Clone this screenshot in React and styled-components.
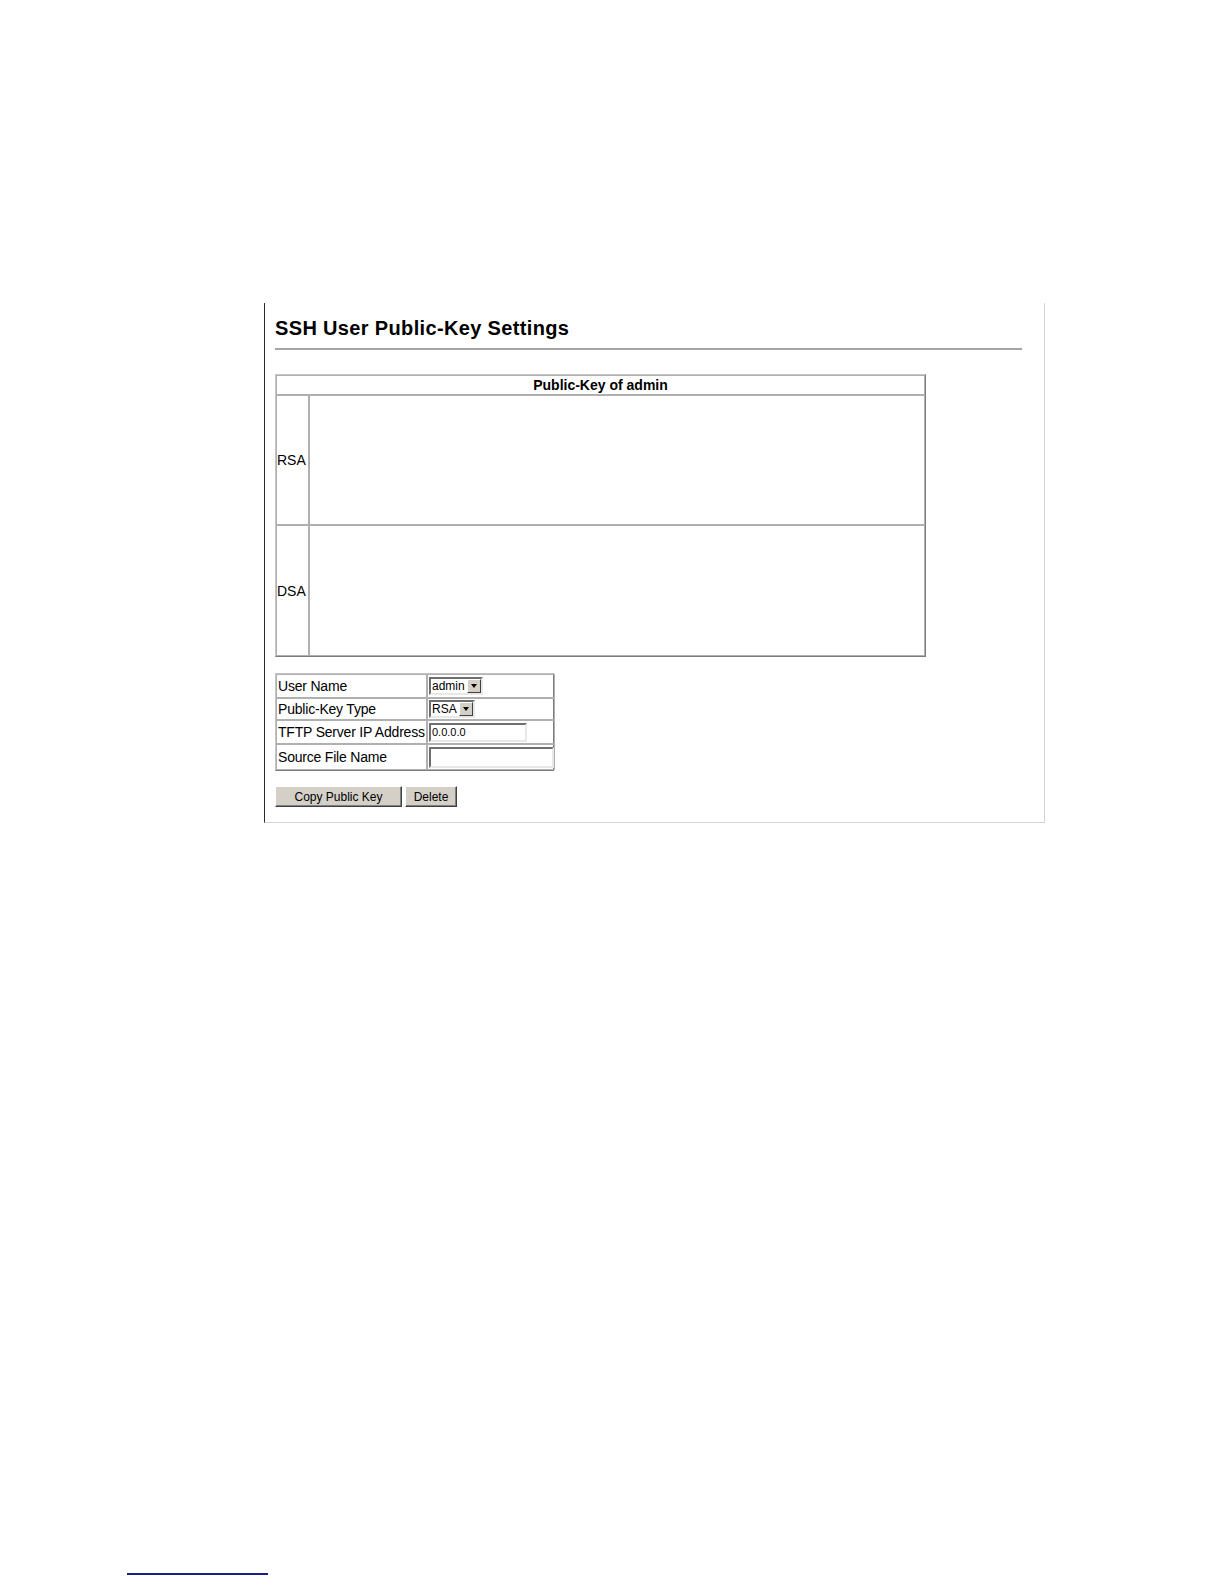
import React from "react";
import styled, { createGlobalStyle } from "styled-components";

const GlobalStyle = createGlobalStyle`
  html, body {
    margin: 0;
    padding: 0;
    background: #fff;
  }
  body {
    font-family: "Liberation Sans", Arial, sans-serif;
    color: #000;
  }
`;

const Page = styled.div`
  padding-top: 303px;
  padding-bottom: 6px;
`;

const Frame = styled.div`
  margin-left: 264px;
  width: 781px;
  height: 520px;
  box-sizing: border-box;
  border-left: 1px solid #2a2a2a;
  border-right: 1px solid #d4d4d4;
  border-bottom: 1px solid #d4d4d4;
  padding: 13px 0 0 10px;
`;

const Title = styled.h1`
  margin: 0;
  font-size: 20px;
  line-height: 24px;
  font-weight: bold;
  letter-spacing: 0.35px;
`;

const Rule = styled.div`
  margin-top: 8px;
  width: 747px;
  height: 2px;
  background: #a6a6a6;
`;

const KeyTable = styled.div`
  margin-top: 24px;
  width: 651px;
  display: grid;
  grid-template-columns: 33px 1fr;
  grid-template-rows: 20px 130px 131px;
  box-sizing: border-box;
  border: 1px solid;
  border-color: #c4c4c4 #7c7c7c #7c7c7c #c4c4c4;
`;

const Cell = styled.div`
  border: 1px solid #b0b0b0;
  display: flex;
  align-items: center;
  font-size: 14px;
  ${(p) => p.$span && "grid-column: 1 / 3;"}
  ${(p) => p.$center && "justify-content: center;"}
  ${(p) => p.$bold && "font-weight: bold;"}
`;

const FormTable = styled.div`
  margin-top: 16px;
  width: 279px;
  display: grid;
  grid-template-columns: 151px 1fr;
  grid-template-rows: 24px 22px 24px 26px;
  box-sizing: border-box;
  border: 1px solid;
  border-color: #c4c4c4 #7c7c7c #7c7c7c #c4c4c4;
`;

const Label = styled.div`
  border: 1px solid #b0b0b0;
  display: flex;
  align-items: center;
  padding-left: 1px;
  font-size: 14px;
  white-space: nowrap;
  letter-spacing: -0.2px;
`;

const Field = styled.div`
  border: 1px solid #b0b0b0;
  display: flex;
  align-items: center;
  padding-left: 1px;
`;

const Select = styled.div`
  display: flex;
  align-items: center;
  height: 18px;
  width: ${(p) => p.$w}px;
  box-sizing: border-box;
  border: 2px solid;
  border-color: #6e6e6e #e8e8e8 #e8e8e8 #6e6e6e;
  background: #fff;
  font-size: 12px;
  padding-left: 1px;
  justify-content: space-between;
`;

const Arrow = styled.span`
  width: 14px;
  height: 14px;
  box-sizing: border-box;
  background: #d4d0c8;
  border: 1px solid;
  border-color: #fff #404040 #404040 #fff;
  display: flex;
  align-items: center;
  justify-content: center;
  &::after {
    content: "";
    border-left: 3px solid transparent;
    border-right: 3px solid transparent;
    border-top: 4px solid #000;
  }
`;

const Input = styled.div`
  height: ${(p) => p.$h}px;
  width: ${(p) => p.$w}px;
  box-sizing: border-box;
  border: 2px solid;
  border-color: #6e6e6e #e8e8e8 #e8e8e8 #6e6e6e;
  background: #fff;
  font-size: 11px;
  display: flex;
  align-items: center;
  padding-left: 1px;
`;

const Buttons = styled.div`
  margin-top: 15px;
  display: flex;
  gap: 3px;
`;

const Button = styled.button`
  width: ${(p) => p.$w}px;
  height: 21px;
  box-sizing: border-box;
  background: #d4d0c8;
  border: 1px solid;
  border-color: #fff #404040 #404040 #fff;
  box-shadow: inset -1px -1px 0 #808080;
  font-family: "Liberation Sans", Arial, sans-serif;
  font-size: 12px;
  color: #000;
  padding: 0;
`;

const FooterLine = styled.div`
  margin: 750px 0 0 127px;
  width: 141px;
  height: 2px;
  background: #1c1c8a;
`;

const keys = [
  { type: "RSA", value: "" },
  { type: "DSA", value: "" },
];

export default function App() {
  return (
    <Page>
      <GlobalStyle />
      <Frame>
        <Title>SSH User Public-Key Settings</Title>
        <Rule />
        <KeyTable>
          <Cell $span $center $bold>
            Public-Key of admin
          </Cell>
          {keys.map((k) => (
            <React.Fragment key={k.type}>
              <Cell>{k.type}</Cell>
              <Cell>{k.value}</Cell>
            </React.Fragment>
          ))}
        </KeyTable>
        <FormTable>
          <Label>User Name</Label>
          <Field>
            <Select $w={54}>
              admin
              <Arrow />
            </Select>
          </Field>
          <Label>Public-Key Type</Label>
          <Field>
            <Select $w={46}>
              RSA
              <Arrow />
            </Select>
          </Field>
          <Label>TFTP Server IP Address</Label>
          <Field>
            <Input $w={98} $h={19}>0.0.0.0</Input>
          </Field>
          <Label>Source File Name</Label>
          <Field>
            <Input $w={125} $h={21} />
          </Field>
        </FormTable>
        <Buttons>
          <Button $w={127}>Copy Public Key</Button>
          <Button $w={52}>Delete</Button>
        </Buttons>
      </Frame>
      <FooterLine />
    </Page>
  );
}
